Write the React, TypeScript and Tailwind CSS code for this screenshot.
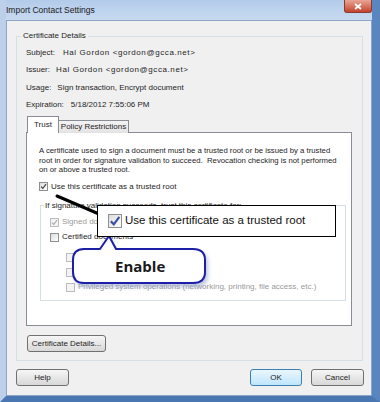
import React from "react";

const FONT = { fontFamily: '"Liberation Sans", Arial, sans-serif' };

function Box({ checked, disabled, big }: { checked?: boolean; disabled?: boolean; big?: boolean }) {
  const s = big ? 14 : 9;
  return (
    <span
      className={`inline-flex shrink-0 items-center justify-center border ${
        disabled ? "border-[#bcbcbc] bg-[#f4f4f4]" : "border-[#8e8f8f] bg-gradient-to-br from-[#dcdcdc] to-white"
      } ${big ? "h-[14px] w-[14px] border-[#7a7a7a] from-[#c9d4ea] to-[#f5f7fc]" : "h-[9px] w-[9px]"}`}
    >
      {checked && (
        <svg width={s - 2} height={s - 2} viewBox="0 0 10 10">
          <path
            d="M1.5 5.2 L4 7.8 L8.6 1.6"
            fill="none"
            stroke={disabled ? "#a8a8a8" : big ? "#3c4fa0" : "#3a3a3a"}
            strokeWidth={big ? 1.8 : 1.6}
          />
        </svg>
      )}
    </span>
  );
}

function Btn({ label, w, primary }: { label: string; w: string; primary?: boolean }) {
  return (
    <div
      className={`flex h-[17px] items-center justify-center rounded-[3px] border text-[8px] text-[#1e1e1e] ${w} ${
        primary
          ? "border-[#3c7fb1] bg-gradient-to-b from-[#eaf6fd] to-[#bee6fd]"
          : "border-[#707070] bg-gradient-to-b from-[#f6f6f6] to-[#d8d8d8]"
      }`}
    >
      {label}
    </div>
  );
}

export default function App() {
  return (
    <div
      className="relative flex h-[402px] w-[380px] flex-col overflow-hidden border-b-[6px] border-l-[6px] border-r-[8px] border-b-[#4a76b1] border-l-[#bcd0ea] border-r-[#5a86c0] bg-[#bcd0ea]"
      style={FONT}
    >
      {/* title bar */}
      <div className="-ml-[6px] -mr-[8px] flex h-[20px] shrink-0 items-start bg-gradient-to-b from-[#b3cbea] to-[#c8daf0]">
        <span className="ml-[6px] mt-[5px] text-[8.5px] leading-[10px] text-[#1a1a1a]">Import Contact Settings</span>
        <div className="ml-auto mr-[8px] flex h-[13px] w-[28px] items-center justify-center rounded-b-[3px] border border-t-0 border-[#8b3a2e] bg-gradient-to-b from-[#e9a595] to-[#c2412b]">
          <svg width="8" height="7" viewBox="0 0 8 7">
            <path d="M1 1 L7 6 M7 1 L1 6" stroke="white" strokeWidth="1.8" />
          </svg>
        </div>
      </div>

      {/* client area */}
      <div className="flex flex-1 flex-col border border-[#8da6c8] bg-[#f0f0f0] text-[8px] text-[#1e1e1e]">
        <fieldset className="ml-[9px] mt-[10px] h-[330px] w-[347px] border border-[#d5dfe5] px-[0px]">
          <legend className="ml-[4px] px-[2px] leading-[10px]">Certificate Details</legend>
          <div className="pl-[9px] pt-[3px]">
            <div className="flex h-[17.5px] items-center gap-[8px]">
              <span>Subject:</span>
              <span className="tracking-[0.6px]">Hal Gordon &lt;gordon@gcca.net&gt;</span>
            </div>
            <div className="flex h-[17.5px] items-center gap-[6px]">
              <span>Issuer:</span>
              <span className="tracking-[0.6px]">Hal Gordon &lt;gordon@gcca.net&gt;</span>
            </div>
            <div className="flex h-[17.5px] items-center gap-[6px]">
              <span>Usage:</span>
              <span>Sign transaction, Encrypt document</span>
            </div>
            <div className="flex h-[17.5px] items-center gap-[7px]">
              <span>Expiration:</span>
              <span>5/18/2012 7:55:06 PM</span>
            </div>
          </div>

          {/* tabs */}
          <div className="relative z-10 -mb-px ml-[10px] mt-[2px] flex items-end">
            <div className="flex h-[17px] w-[32px] items-center justify-center border border-b-0 border-[#898c95] bg-white">
              Trust
            </div>
            <div className="flex h-[13px] w-[70px] items-center justify-center border border-b-0 border-l-0 border-[#898c95] bg-gradient-to-b from-[#f3f3f3] to-[#e3e3e3]">
              Policy Restrictions
            </div>
          </div>
          <div className="ml-[9px] h-[194px] w-[326px] border border-[#898c95] bg-white pl-[12px] pt-[13px]">
            <p className="text-[7.75px] leading-[9.5px]">
              A certificate used to sign a document must be a trusted root or be issued by a trusted
              <br />
              root in order for signature validation to succeed.&nbsp; Revocation checking is not performed
              <br />
              on or above a trusted root.
            </p>
            <div className="mt-[7px] flex h-[10px] items-center gap-[3px]">
              <Box checked />
              <span>Use this certificate as a trusted root</span>
            </div>
            <fieldset className="ml-[1px] mt-[9px] h-[100px] w-[306px] border border-[#d5dfe5]">
              <legend className="ml-[3px] px-[1px] leading-[10px]">
                If signature validation succeeds, trust this certificate for:
              </legend>
              <div className="pl-[9px] pt-[4px] text-[#9a9a9a]">
                <div className="flex h-[15px] items-center gap-[3px]">
                  <Box checked disabled />
                  <span>Signed documents or data</span>
                </div>
                <div className="flex h-[15px] items-center gap-[3px] text-[#1e1e1e]">
                  <Box />
                  <span>Certified documents</span>
                </div>
                <div className="ml-[16px] mt-[5px] flex h-[15px] items-center gap-[3px]">
                  <Box disabled />
                  <span>Dynamic content</span>
                </div>
                <div className="ml-[16px] flex h-[15px] items-center gap-[3px]">
                  <Box disabled />
                  <span>Embedded high privilege JavaScript</span>
                </div>
                <div className="ml-[16px] flex h-[15px] items-center gap-[3px]">
                  <Box disabled />
                  <span>Privileged system operations (networking, printing, file access, etc.)</span>
                </div>
              </div>
            </fieldset>
          </div>
          <div className="ml-[10px] mt-[9px]">
            <Btn label="Certificate Details..." w="w-[79px]" />
          </div>
        </fieldset>

        <div className="ml-[9px] mr-[7px] mt-[8px] flex gap-[9px]">
          <Btn label="Help" w="w-[53px]" />
          <div className="flex-1" />
          <Btn label="OK" w="w-[52px]" primary />
          <Btn label="Cancel" w="w-[53px]" />
        </div>
      </div>

      {/* annotation overlays */}
      <svg className="absolute left-[-6px] top-0" width="380" height="402" viewBox="0 0 380 402">
        <line x1="57" y1="196" x2="99" y2="214" stroke="black" strokeWidth="3" strokeLinecap="round" />
        <defs>
          <filter id="sh" x="-20%" y="-20%" width="140%" height="150%">
            <feGaussianBlur stdDeviation="2" />
          </filter>
        </defs>
        <path
          d="M86 252 L101 252 L110 236 L117 252 L196 252 Q208 252 208 263 L208 275 Q208 287 196 287 L86 287 Q75 287 75 275 L75 263 Q75 252 86 252 Z"
          fill="#8f9fc8"
          opacity="0.6"
          filter="url(#sh)"
        />
        <path
          d="M84 249 L100 249 L109 236 L116 249 L193 249 Q205 249 205 260 L205 272 Q205 283 193 283 L84 283 Q73 283 73 272 L73 260 Q73 249 84 249 Z"
          fill="white"
          stroke="#1d1fa6"
          strokeWidth="2"
          strokeLinejoin="round"
        />
      </svg>
      <div className="absolute left-[109px] top-[257px] text-[15px] font-bold leading-[18px] text-[#1a1a1a]" style={{ fontFamily: '"Open Sans", "Liberation Sans", sans-serif' }}>
        Enable
      </div>
      <div className="absolute left-[91px] top-[205px] flex h-[32px] w-[239px] items-center gap-[3px] border border-black bg-white pl-[10px] text-[11.5px] text-[#111]">
        <Box checked big />
        <span>Use this certificate as a trusted root</span>
      </div>
    </div>
  );
}
